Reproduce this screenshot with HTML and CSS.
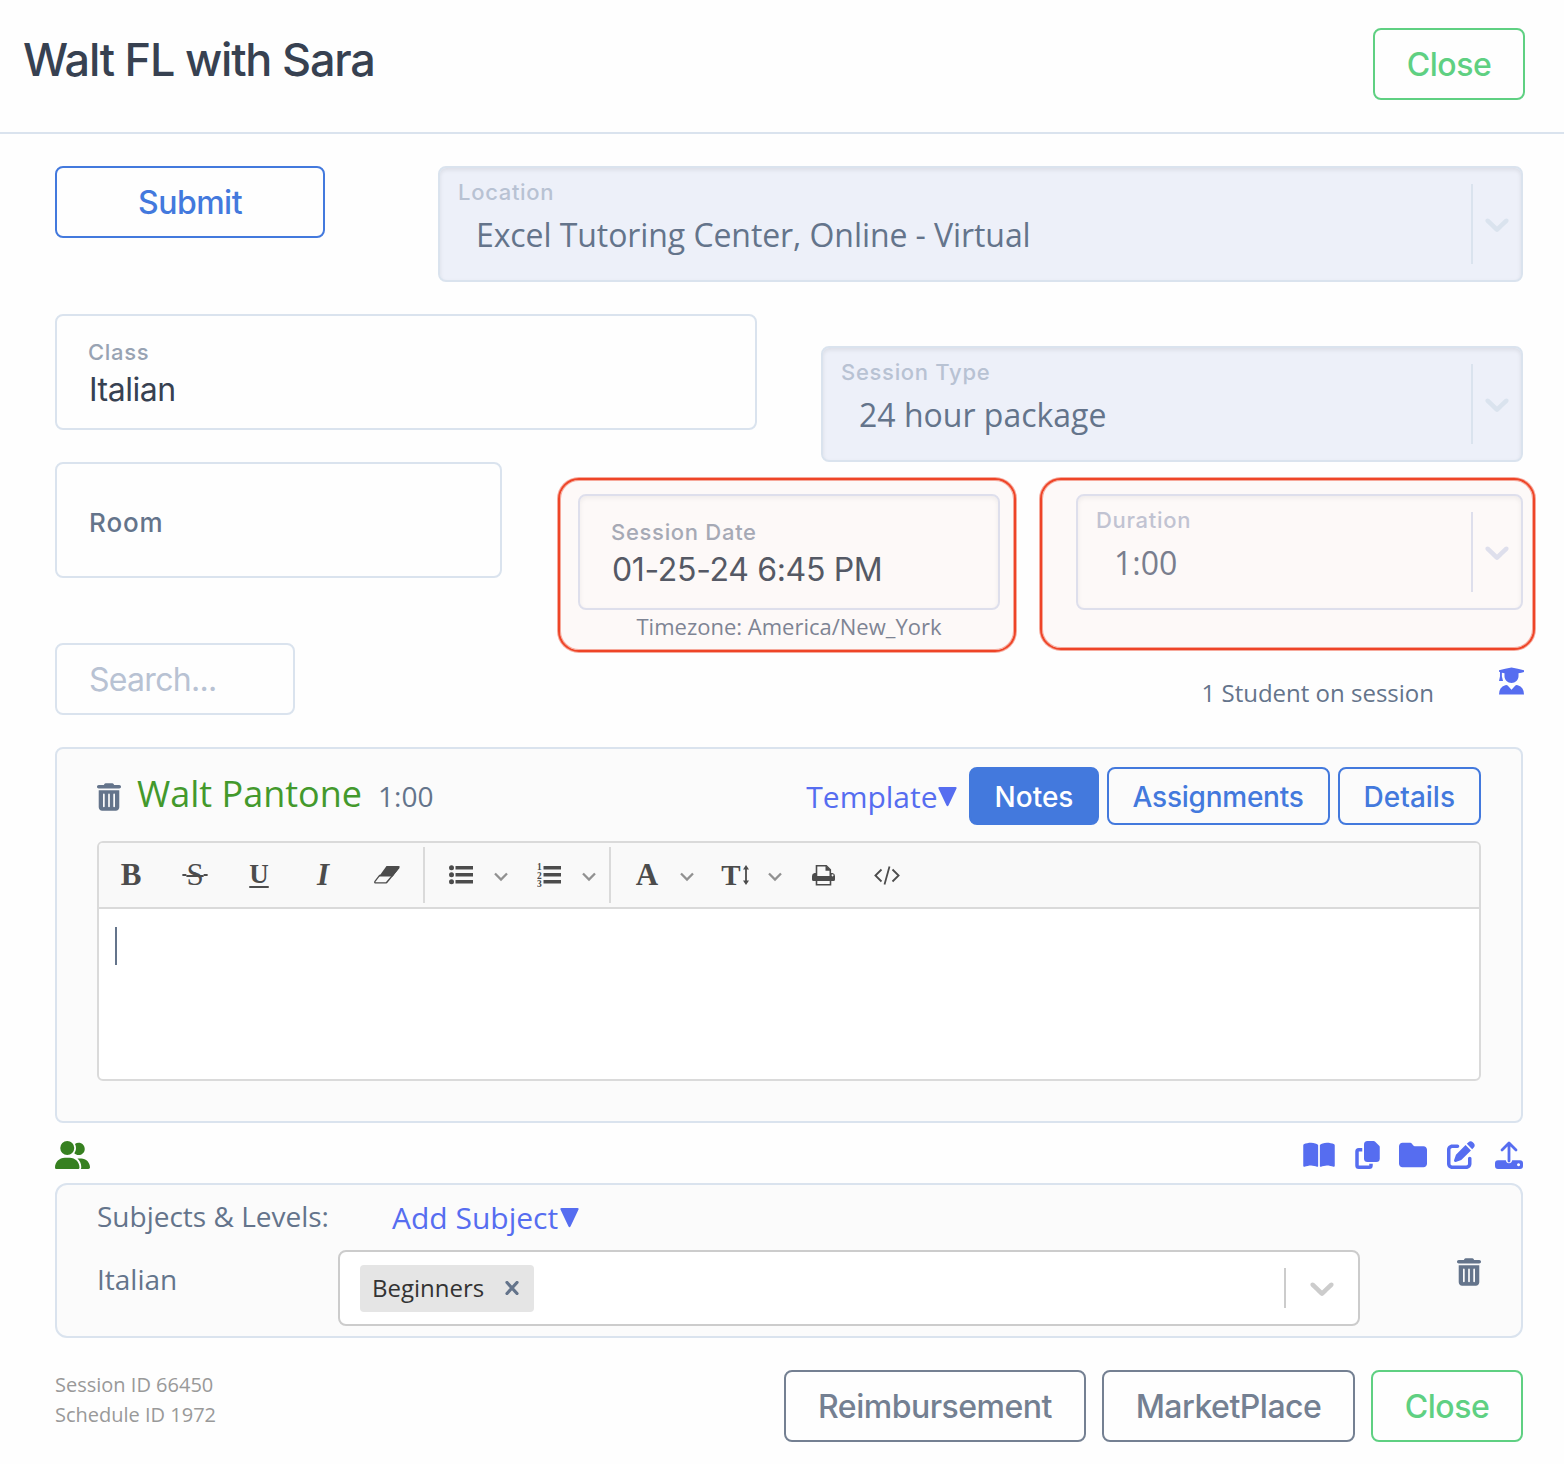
FILE: index.html
```
<!DOCTYPE html>
<html lang="en">
<head>
  <meta charset="UTF-8">
  <meta name="viewport" content="width=device-width, initial-scale=1.0">
  <title>Session</title>
  <link rel="stylesheet" href="styles.css">
</head>
<body>
  <svg class="sprite">
    <symbol id="trash" viewBox="0 0 448 512">
      <path fill-rule="evenodd" d="M135 18C141 7 152 0 164 0h120c12 0 23 7 29 18l7 14h96c18 0 32 14 32 32s-14 32-32 32H32C14 96 0 82 0 64s14-32 32-32h96zM32 128h384v320c0 35-29 64-64 64H96c-35 0-64-29-64-64zm96 64c-9 0-16 7-16 16v224c0 9 7 16 16 16s16-7 16-16V208c0-9-7-16-16-16zm96 0c-9 0-16 7-16 16v224c0 9 7 16 16 16s16-7 16-16V208c0-9-7-16-16-16zm96 0c-9 0-16 7-16 16v224c0 9 7 16 16 16s16-7 16-16V208c0-9-7-16-16-16z"/>
    </symbol>
    <symbol id="chevron" viewBox="0 0 20 20">
      <path d="M4.516 7.548c0.436-0.446 1.043-0.481 1.576 0l3.908 3.747 3.908-3.747c0.533-0.481 1.141-0.446 1.574 0 0.436 0.445 0.408 1.197 0 1.615-0.406 0.418-4.695 4.502-4.695 4.502-0.217 0.223-0.502 0.335-0.787 0.335s-0.57-0.112-0.789-0.335c0 0-4.287-4.084-4.695-4.502s-0.436-1.17 0-1.615z"/>
    </symbol>
    <symbol id="caret" viewBox="0 0 14 10">
      <path d="M1 1.5l6 6 6-6" fill="none" stroke="#919191" stroke-width="2.300"/>
    </symbol>
    <symbol id="triangle" viewBox="0 0 19 20">
      <path d="M1.6 0h15.8q1.8 0 1 1.7L10.6 18.3q-1.1 2-2.2 0L.6 1.7Q-.2 0 1.6 0z"/>
    </symbol>
  </svg>

  <header class="header">
    <h1>Walt FL with Sara</h1>
    <button class="btn btn-green">Close</button>
  </header>

  <main class="content">
    <div class="row row-top">
      <button class="btn btn-blue btn-submit">Submit</button>
      <div class="select location">
        <div class="select-body">
          <span class="label">Location</span>
          <span class="value">Excel Tutoring Center, Online - Virtual</span>
        </div>
        <div class="select-arrow"><svg><use href="#chevron"/></svg></div>
      </div>
    </div>

    <div class="row row-class">
      <div class="field class-field">
        <span class="label">Class</span>
        <span class="value">Italian</span>
      </div>
      <div class="select session-type">
        <div class="select-body">
          <span class="label">Session Type</span>
          <span class="value">24 hour package</span>
        </div>
        <div class="select-arrow"><svg><use href="#chevron"/></svg></div>
      </div>
    </div>

    <div class="row row-date">
      <div class="field room"><span>Room</span></div>
      <div class="highlight date-box">
        <div class="field session-date">
          <span class="label">Session Date</span>
          <span class="value">01-25-24 6:45 PM</span>
        </div>
        <p class="timezone">Timezone: America/New_York</p>
      </div>
      <div class="highlight duration-box">
        <div class="select duration">
          <div class="select-body">
            <span class="label">Duration</span>
            <span class="value">1:00</span>
          </div>
          <div class="select-arrow"><svg><use href="#chevron"/></svg></div>
        </div>
      </div>
    </div>

    <div class="row row-search">
      <input class="search" type="text" placeholder="Search...">
      <span class="count">1 Student on session</span>
      <svg class="icon-student" viewBox="0 0 26 28">
        <path d="M0 2.8Q6.5 1 13 0q6.500 1 13 2.800v1.800Q23.500 5.400 20.300 6v2.800C20.300 13 17 16 13 16S5.700 13 5.700 8.800V6L3 5.400v4l1.200 4.700H0l1-4.700V4.700L0 4.300z"/>
        <path d="M6.500 18.400Q8 17.700 9 18.800l4 4.300 4-4.300q1-1.100 2.500-.4Q26 20.500 26 28H0q0-7.500 6.500-9.600z"/>
      </svg>
    </div>

    <section class="card student-card">
      <div class="student-head">
        <svg class="icon-trash"><use href="#trash"/></svg>
        <span class="student-name">Walt Pantone</span>
        <span class="student-time">1:00</span>
        <span class="dropdown">Template<svg><use href="#triangle"/></svg></span>
        <button class="btn-sm active">Notes</button>
        <button class="btn-sm btn-assignments">Assignments</button>
        <button class="btn-sm">Details</button>
      </div>
      <div class="editor">
        <div class="toolbar">
          <span class="tool tool-bold">B</span>
          <span class="tool tool-strike">S</span>
          <span class="tool tool-underline">U</span>
          <span class="tool tool-italic">I</span>
          <span class="tool">
            <svg width="26" height="18" viewBox="0 0 26 18">
              <path fill="#4c4c4c" d="M12.500 0h12q2 0 .8 1.800L18.600 10.500H5z"/>
              <path fill="none" stroke="#4c4c4c" stroke-width="1.300" d="M5.600 9.300L1.200 15q-1.200 1.900.7 1.900h10.200L18.700 9.300zM12.500 16.900L25 1.500"/>
            </svg>
          </span>
          <span class="divider"></span>
          <span class="tool">
            <svg width="24" height="20" viewBox="0 0 24 20" fill="#4c4c4c">
              <circle cx="2.500" cy="2.700" r="2.500"/><circle cx="2.500" cy="9.800" r="2.500"/><circle cx="2.500" cy="16.800" r="2.500"/>
              <path d="M6.500 1H24v3.500H6.500zM6.500 8.100H24v3.500H6.500zM6.500 15.100H24v3.500H6.500z"/>
            </svg>
          </span>
          <span class="arrow"><svg><use href="#caret"/></svg></span>
          <span class="tool">
            <svg width="24" height="26" viewBox="0 0 24 26" fill="#4c4c4c">
              <g class="list-digits">
                <text x="0" y="8">1</text><text x="0" y="16.500">2</text><text x="0" y="25">3</text>
              </g>
              <path d="M6.500 4H24v3.500H6.500zM6.500 11.100H24v3.500H6.500zM6.500 18.100H24v3.500H6.500z"/>
            </svg>
          </span>
          <span class="arrow"><svg><use href="#caret"/></svg></span>
          <span class="divider"></span>
          <span class="tool tool-color">A</span>
          <span class="arrow"><svg><use href="#caret"/></svg></span>
          <span class="tool tool-size">T<svg width="6" height="20" viewBox="0 0 6 20">
            <path fill="#4c4c4c" d="M3 0l3 4.500H3.900v11H6L3 20l-3-4.500h2.100v-11H0z"/>
          </svg></span>
          <span class="arrow"><svg><use href="#caret"/></svg></span>
          <span class="tool">
            <svg width="23" height="21" viewBox="0 0 23 21">
              <path fill="none" stroke="#4c4c4c" stroke-width="1.600" d="M4.500 11V.8h9.800l4 4V11M4.500 15v4.700h14V15"/>
              <path fill="#4c4c4c" d="M13.500.5l5.300 5.300h-5.300z"/>
              <path fill="#4c4c4c" fill-rule="evenodd" d="M2.500 8h1.700v3h14.600V8h1.700Q23 8.500 23 11v3.500q0 1.500-1.500 1.500H1.500Q0 16 0 14.500V11q0-2.500 2.500-3zM20.500 9.300a1 1 0 1 0 .1 0z"/>
            </svg>
          </span>
          <span class="tool">
            <svg width="26" height="20" viewBox="0 0 26 20" fill="none" stroke="#4c4c4c" stroke-width="1.800">
              <path d="M7.500 4.500L1.400 10.500l6.100 6M18.500 4.500l6.100 6-6.100 6M15.500 1.500l-5 18"/>
            </svg>
          </span>
        </div>
        <div class="editor-body"><span class="cursor"></span></div>
      </div>
    </section>

    <div class="row row-icons">
      <svg class="icon-users" viewBox="0 0 640 512">
        <path d="M96 128a128 128 0 1 1 256 0A128 128 0 1 1 96 128zM0 482.300C0 383.800 79.800 304 178.300 304h91.400C368.200 304 448 383.800 448 482.300c0 16.400-13.300 29.700-29.700 29.700H29.700C13.300 512 0 498.700 0 482.300zM609.300 512H471.400c5.400-9.400 8.600-20.300 8.600-32v-8c0-60.700-27.100-115.200-69.800-151.800 2.400-.1 4.700-.2 7.100-.2h61.400C567.800 320 640 392.200 640 481.300c0 17-13.800 30.700-30.700 30.700zM432 256c-31 0-59-12.600-79.300-32.900C372.400 196.500 384 163.600 384 128c0-26.800-6.600-52.100-18.300-74.300C384.300 40.100 407.200 32 432 32c61.900 0 112 50.100 112 112s-50.100 112-112 112z"/>
      </svg>
      <div class="actions">
        <svg width="32" height="28" viewBox="0 0 576 512">
          <path d="M249.600 471.500c10.800 3.800 22.400-4.100 22.400-15.500V78.600c0-4.200-1.600-8.400-5-11C247.400 52 202.400 32 144 32 93.500 32 46.300 45.300 18.100 56.100 6.800 60.500 0 71.700 0 83.800v370.300c0 11.900 12.800 20.200 24.100 16.500C55.600 460.100 105.500 448 144 448c33.900 0 79 14 105.600 23.500zm76.800 0C353 462 398.100 448 432 448c38.500 0 88.400 12.100 119.900 22.600 11.300 3.800 24.100-4.600 24.100-16.500V83.800c0-12.100-6.800-23.300-18.100-27.600C529.700 45.300 482.500 32 432 32c-58.400 0-103.400 20-123 35.600-3.300 2.600-5 6.800-5 11V456c0 11.400 11.700 19.300 22.400 15.500z"/>
        </svg>
        <svg width="25" height="28" viewBox="0 0 448 512">
          <path d="M224 0h112q14 0 24 10l78 78q10 10 10 24v208q0 64-64 64H224q-64 0-64-64V64q0-64 64-64z"/>
          <path d="M64 128h64v64H64v256h192v-32h64v32q0 64-64 64H64q-64 0-64-64V192q0-64 64-64z"/>
        </svg>
        <svg width="28" height="28" viewBox="0 0 512 512">
          <path d="M64 480h384c35.300 0 64-28.700 64-64V160c0-35.300-28.700-64-64-64H288c-10.100 0-19.600-4.700-25.600-12.800L243.200 57.600C231.100 41.500 212.100 32 192 32H64C28.700 32 0 60.700 0 96v320c0 35.300 28.700 64 64 64z"/>
        </svg>
        <svg width="28" height="28" viewBox="0 0 512 512">
          <path d="M471.600 21.700c-21.900-21.900-57.300-21.900-79.200 0l-30.100 30 97.900 97.900 30.100-30.100c21.900-21.900 21.900-57.300 0-79.200zM172.400 241.700c-6.100 6.100-10.800 13.600-13.500 21.900l-29.600 88.800c-2.900 8.600-.6 18.100 5.800 24.600s15.900 8.700 24.600 5.800l88.800-29.600c8.200-2.700 15.700-7.400 21.900-13.500l167.300-167.400-98-98zM96 64C43 64 0 107 0 160v256c0 53 43 96 96 96h256c53 0 96-43 96-96v-96c0-17.700-14.300-32-32-32s-32 14.300-32 32v96c0 17.700-14.300 32-32 32H96c-17.700 0-32-14.300-32-32V160c0-17.700 14.300-32 32-32h96c17.700 0 32-14.300 32-32s-14.300-32-32-32z"/>
        </svg>
        <svg width="28" height="28" viewBox="0 0 28 28">
          <path fill="none" stroke="#566df0" stroke-width="2.800" stroke-linecap="round" stroke-linejoin="round" d="M14 20V2.500M7 9l7-7 7 7"/>
          <path fill-rule="evenodd" d="M3 19.300h7.800c.3 1.900 1.500 3 3.200 3s2.900-1.100 3.200-3H25q3 0 3 3V25q0 3-3 3H3q-3 0-3-3v-2.700q0-3 3-3zM23.500 22.200a1.500 1.500 0 1 0 .1 0z"/>
        </svg>
      </div>
    </div>

    <section class="card subjects">
      <div class="subjects-head">
        <span class="subjects-title">Subjects &amp; Levels:</span>
        <span class="dropdown">Add Subject<svg><use href="#triangle"/></svg></span>
      </div>
      <div class="subject-row">
        <span class="subject-name">Italian</span>
        <div class="levels">
          <span class="tag">Beginners
            <svg width="14" height="14" viewBox="0 0 14 14"><path d="M2 1.500l10 11M12 1.500l-10 11" stroke="#64748b" stroke-width="3.200" stroke-linecap="round"/></svg>
          </span>
          <span class="levels-arrow"><svg><use href="#chevron"/></svg></span>
        </div>
        <svg class="icon-trash"><use href="#trash"/></svg>
      </div>
    </section>

    <footer class="footer">
      <div class="ids">
        <div>Session ID 66450</div>
        <div>Schedule ID 1972</div>
      </div>
      <button class="btn btn-gray">Reimbursement</button>
      <button class="btn btn-gray">MarketPlace</button>
      <button class="btn btn-green">Close</button>
    </footer>
  </main>
</body>
</html>
```
FILE: styles.css
```
* {
  box-sizing: border-box;
}
body {
  margin: 0;
  background: #fefefe;
  color: #64748b;
  font-family: "Open Sans", "Noto Sans", sans-serif;
}
svg {
  display: block;
  flex: none;
}
.sprite {
  display: none;
}
button {
  margin: 0;
  font-family: Inter, sans-serif;
  font-weight: 500;
  white-space: nowrap;
}

/* header */
.header {
  display: flex;
  justify-content: space-between;
  height: 134px;
  padding: 28px 39px 0 23px;
  border-bottom: 2px solid #dae3ee;
}
h1 {
  margin: 0;
  font: 500 45px/64px Inter, sans-serif;
  letter-spacing: -1.2px;
  color: #374151;
}

/* buttons */
.btn {
  flex: none;
  height: 72px;
  padding: 1px 0 0;
  border: 2px solid;
  border-radius: 8px;
  background: transparent;
  font-size: 32px;
  letter-spacing: -0.5px;
}
.btn-green {
  width: 152px;
  color: #5fd082;
}
.btn-blue {
  color: #4379dd;
}
.btn-gray {
  width: 302px;
  color: #748092;
}
.btn-gray + .btn-gray {
  width: 253px;
}
.btn-submit {
  width: 270px;
}
.btn-sm {
  height: 58px;
  padding: 1px 24px 0;
  border: 2px solid #4379dd;
  border-radius: 8px;
  background: transparent;
  color: #4379dd;
  font-size: 28px;
}
.btn-sm.active {
  width: 130px;
  background: #4379dd;
  color: #fff;
}
.btn-assignments {
  width: 223px;
  letter-spacing: -0.25px;
}

/* fields */
.content {
  padding: 32px 41px 0 55px;
}
.row {
  display: flex;
  justify-content: space-between;
  align-items: flex-start;
}
.row-top,
.row-class {
  height: 148px;
}
.field {
  height: 116px;
  padding: 22px 31px 0;
  border: 2px solid #dae3ee;
  border-radius: 8px;
}
.label,
.value {
  display: block;
  white-space: nowrap;
}
.label {
  font: 500 22px/28px Inter, sans-serif;
  letter-spacing: 0.7px;
  color: #98a3b3;
}
.field .value {
  margin: 2px 0 0 1px;
  font: 400 32px/43px Inter, sans-serif;
  letter-spacing: -0.5px;
  color: #374151;
}
.class-field {
  width: 702px;
}
.room {
  width: 447px;
  padding: 1px 32px 0;
  font: 500 26px/116px Inter, sans-serif;
  letter-spacing: 0.9px;
}
.select {
  display: flex;
  align-items: center;
  height: 116px;
  border: 2px solid #dae3ee;
  border-radius: 8px;
  background: #edf0f9;
  box-shadow: inset 0 2px 4px rgba(0, 0, 0, 0.08);
}
.select-body {
  flex: 1;
  height: 100%;
  padding: 10px 0 0 18px;
}
.select .label {
  color: #b8c2d3;
}
.select .value {
  margin: 7px 0 0 18px;
  font-size: 32px;
  line-height: 44px;
}
.location .value {
  letter-spacing: -0.08px;
}
.select-arrow {
  display: flex;
  align-items: center;
  justify-content: center;
  width: 50px;
  height: 80px;
  border-left: 2px solid #dae3ee;
}
.select-arrow svg,
.levels-arrow svg {
  width: 40px;
  height: 40px;
}
.select-arrow svg {
  fill: #dae3ee;
}
.location {
  width: 1085px;
}
.session-type {
  width: 702px;
  margin-top: 32px;
}

/* highlighted date and duration */
.row-date {
  height: 181px;
  margin-right: -12px;
}
.highlight {
  border: 2px solid #ee4427;
  border-radius: 21px;
  background: #fdf9f8;
  box-shadow: 0 0 0 1px rgba(238, 68, 39, 0.45), inset 0 0 0 1px rgba(238, 68, 39, 0.45);
}
.date-box {
  width: 458px;
  height: 174px;
  margin: 16px -32px 0 0;
  padding: 14px 14px 0 18px;
}
.session-date {
  width: 422px;
  border-color: #dedfec;
  box-shadow: inset 0 2px 5px rgba(0, 0, 0, 0.06);
}
.session-date .value {
  letter-spacing: -0.33px;
  color: #555965;
}
.session-date .label {
  color: #a6a9b5;
}
.timezone {
  width: 422px;
  margin: 1px 0 0;
  font-size: 22px;
  line-height: 30px;
  text-align: center;
  color: #7e8494;
}
.duration-box {
  width: 495px;
  height: 172px;
  margin-top: 16px;
  padding: 14px 10px 0 34px;
}
.duration {
  background: none;
  border-color: #dedfec;
  box-shadow: inset 0 2px 5px rgba(0, 0, 0, 0.06);
}
.duration .label {
  color: #c1c3d2;
}
.duration .value {
  color: #797e8e;
}
.duration .select-arrow {
  border-color: #dedfec;
}
.duration .select-arrow svg {
  fill: #dedfec;
}

/* search */
.row-search {
  height: 104px;
}
.search {
  width: 240px;
  height: 72px;
  padding: 1px 32px 0;
  border: 2px solid #dae3ee;
  border-radius: 8px;
  background: transparent;
  font: 400 32px Inter, sans-serif;
  letter-spacing: -0.7px;
}
.search::placeholder {
  color: #b8c2d3;
}
.count {
  margin: 33px 65px 0 auto;
  font-size: 24px;
  line-height: 34px;
}
.icon-student {
  width: 25px;
  height: 28px;
  margin: 24px -1px 0 0;
  fill: #566df0;
}

/* student card */
.card {
  border: 2px solid #dae3ee;
  background: #fbfbfb;
}
.student-card {
  height: 376px;
  padding: 18px 40px 0;
  border-radius: 8px;
}
.student-head {
  display: flex;
  align-items: center;
  gap: 8px;
  height: 58px;
}
.icon-trash {
  width: 24px;
  height: 28px;
  fill: #64748b;
}
.student-head .icon-trash {
  margin-top: 2px;
}
.student-name {
  margin: -6px 8px 0 8px;
  font-size: 36px;
  color: #43992c;
}
.student-time {
  font-size: 28px;
}
.dropdown {
  display: flex;
  align-items: center;
  font-size: 30px;
  color: #566df0;
}
.dropdown svg {
  width: 19px;
  height: 20px;
  margin: 1px 0 0 1px;
  fill: #566df0;
}
.student-head .dropdown {
  margin: 1px 3px 0 auto;
}
.student-head .dropdown svg {
  margin-left: 0;
  margin-right: 1px;
}
.editor {
  height: 240px;
  margin-top: 16px;
  border: 2px solid #dadada;
  border-radius: 6px;
  background: #fff;
}
.toolbar {
  display: flex;
  align-items: center;
  height: 66px;
  border-bottom: 2px solid #dadada;
  border-radius: 4px 4px 0 0;
  background: #f9f9f9;
}
.tool {
  display: flex;
  align-items: center;
  justify-content: center;
  width: 64px;
  height: 64px;
  color: #4c4c4c;
  font: 700 31px/64px "Liberation Serif", serif;
}
.tool-strike {
  font-weight: 400;
  text-decoration: line-through 2px;
}
.tool-strike::before,
.tool-strike::after {
  content: "\00a0";
  font-size: 16px;
}
.tool-underline {
  padding-bottom: 2px;
  font-size: 27px;
  text-decoration: underline 2px;
  text-underline-offset: 3px;
}
.tool-italic {
  font-style: italic;
}
.tool-size {
  gap: 2px;
  font-size: 29px;
}
.list-digits {
  font: 700 9.5px "Liberation Serif", serif;
}
.arrow {
  display: flex;
  justify-content: center;
  width: 24px;
  margin: 3px 4px 0 -4px;
}
.arrow svg {
  width: 14px;
  height: 10px;
}
.divider {
  width: 2px;
  height: 56px;
  margin: 0 4px;
  background: #dadada;
}
.editor-body {
  padding: 18px 16px;
}
.cursor {
  display: block;
  width: 2px;
  height: 38px;
  background: #64748b;
}

/* action icons */
.row-icons {
  height: 60px;
  padding-top: 18px;
}
.icon-users {
  width: 35px;
  height: 28px;
  fill: #368020;
}
.actions {
  display: flex;
  gap: 20px;
  fill: #566df0;
}
.actions svg:nth-child(2) {
  margin-right: -1px;
}

/* subjects */
.subjects {
  height: 155px;
  padding: 10px 40px 0;
  border-radius: 12px;
}
.subjects-head {
  display: flex;
  height: 55px;
}
.subjects-title {
  width: 295px;
  font-size: 28px;
  line-height: 42px;
}
.subjects-head .dropdown {
  height: 44px;
}
.subjects-head .dropdown svg {
  margin-left: 2px;
}
.subject-row {
  display: flex;
}
.subject-name {
  width: 241px;
  margin-top: 8px;
  font-size: 28px;
  line-height: 42px;
}
.levels {
  display: flex;
  align-items: center;
  justify-content: space-between;
  width: 1022px;
  height: 76px;
  padding-left: 20px;
  border: 2px solid #ccc;
  border-radius: 8px;
  background: #fff;
}
.tag {
  display: flex;
  align-items: center;
  gap: 21px;
  width: 174px;
  height: 47px;
  padding: 0 0 1px 12px;
  border-radius: 4px;
  background: #e5e5e5;
  color: #333;
  font-size: 24px;
}
.levels-arrow {
  display: flex;
  align-items: center;
  justify-content: center;
  width: 74px;
  height: 40px;
  border-left: 2px solid #ccc;
  fill: #ccc;
}
.subject-row .icon-trash {
  margin: 8px 0 0 auto;
}

/* footer */
.footer {
  display: flex;
  gap: 16px;
  padding-top: 32px;
}
.ids {
  margin-right: auto;
  font-size: 20px;
  line-height: 30px;
  color: #999;
}
```
